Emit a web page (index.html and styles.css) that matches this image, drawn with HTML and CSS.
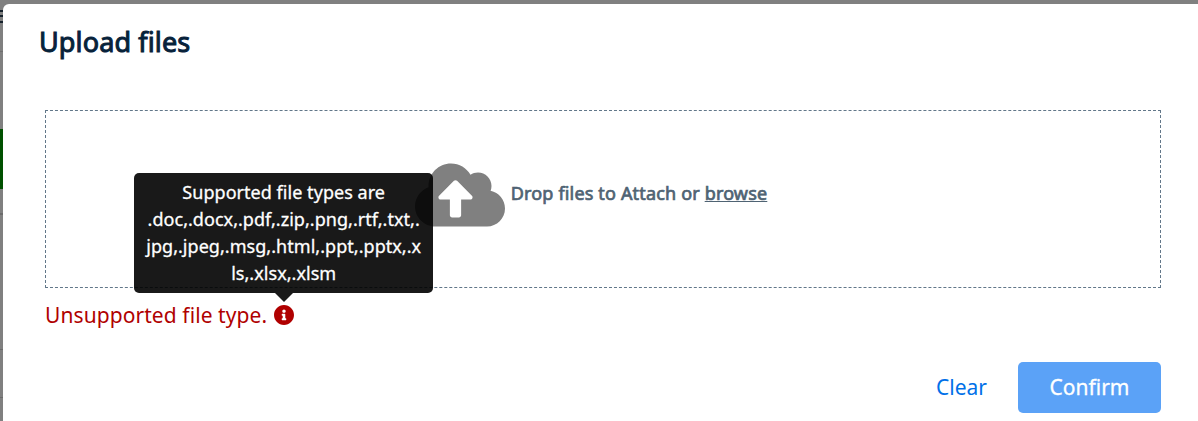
FILE: index.html
```
<!DOCTYPE html>
<html lang="en">
<head>
<meta charset="utf-8">
<title>Upload files</title>
<link rel="stylesheet" href="styles.css">
</head>
<body>
<div class="backdrop">
  <div class="menu-lines"></div>
  <div class="page-block"></div>
</div>
<main class="modal">
  <h1 class="title"><span class="title-text">Upload files</span></h1>
  <section class="dropzone">
    <svg class="cloud" viewBox="0 0 640 512"><path fill="#808080" d="M537.6 226.6c4.1-10.7 6.4-22.4 6.4-34.6 0-53-43-96-96-96-19.7 0-38.1 6-53.3 16.2C367 64.2 315.3 32 256 32c-88.4 0-160 71.6-160 160 0 2.7.1 5.4.2 8.1C40.2 219.8 0 273.2 0 336c0 79.5 64.5 144 144 144h368c70.7 0 128-57.3 128-128 0-61.9-44-113.6-102.4-125.4zM393.4 288H328v112c0 8.8-7.2 16-16 16h-48c-8.8 0-16-7.2-16-16V288h-65.4c-14.3 0-21.4-17.2-11.3-27.3l105.4-105.4c6.2-6.2 16.4-6.2 22.6 0l105.4 105.4c10.1 10.1 2.9 27.3-11.3 27.3z"/></svg>
    <p class="drop-text">Drop files to Attach or <span class="browse">browse</span></p>
  </section>
  <div class="error">
    <span class="error-text">Unsupported file type.</span>
    <span class="info">
      <svg class="info-icon" viewBox="8 8 496 496"><path fill="#b00000" d="M256 8C119.043 8 8 119.083 8 256c0 136.997 111.043 248 248 248s248-111.003 248-248C504 119.083 392.957 8 256 8zm0 110c23.196 0 42 18.804 42 42s-18.804 42-42 42-42-18.804-42-42 18.804-42 42-42zm56 254c0 6.627-5.373 12-12 12h-88c-6.627 0-12-5.373-12-12v-24c0-6.627 5.373-12 12-12h12v-64h-12c-6.627 0-12-5.373-12-12v-24c0-6.627 5.373-12 12-12h64c6.627 0 12 5.373 12 12v100h12c6.627 0 12 5.373 12 12v24z"/></svg>
      <span class="tooltip" role="tooltip">Supported file types are<br>.doc,.docx,.pdf,.zip,.png,.rtf,.txt,.<br>jpg,.jpeg,.msg,.html,.ppt,.pptx,.x<br>ls,.xlsx,.xlsm</span>
    </span>
  </div>
  <footer class="actions">
    <button class="clear">Clear</button>
    <button class="confirm">Confirm</button>
  </footer>
</main>
</body>
</html>
```
FILE: styles.css
```
* { box-sizing: border-box; }
body {
  margin: 0;
  height: 421px;
  overflow: hidden;
  padding: 4px 0 0 3px;
  background: #808080;
  font-family: "Noto Sans", "Open Sans", sans-serif;
}
.backdrop {
  position: absolute;
  left: 0;
  top: 0;
  width: 8px;
  height: 421px;
  background:
    linear-gradient(#6f6f6f, #6f6f6f) 0 51px / 8px 1px no-repeat,
    linear-gradient(#6b6b6b, #6b6b6b) 0 213px / 8px 2px no-repeat,
    linear-gradient(#6b6b6b, #6b6b6b) 0 349px / 8px 1px no-repeat,
    linear-gradient(#6b6b6b, #6b6b6b) 0 397px / 8px 1px no-repeat;
}
.menu-lines {
  width: 3px;
  height: 13px;
  margin-top: 10px;
  background: repeating-linear-gradient(#15212b 0 2px, #808080 2px 5.5px);
}
.page-block { width: 3px; height: 60px; margin-top: 106px; background: #005000; }
.modal {
  position: relative;
  height: 417px;
  padding: 0 37px 0 42px;
  background: #fff;
  border-radius: 6px 0 0 0;
}
.title {
  margin: 0 0 0 -6px;
  height: 106px;
  padding-top: 19px;
  font-size: 27px;
  line-height: 38px;
  font-weight: 400;
  letter-spacing: .13px;
  color: #07223a;
  -webkit-text-stroke: 1px #07223a;
}
.dropzone {
  height: 178px;
  border: 1px dashed #627789;
  display: flex;
  justify-content: center;
  gap: 6px;
  padding-right: 24px;
}
.cloud { width: 90px; height: 72px; margin-top: 48px; }
.drop-text {
  margin: 69px 0 0;
  font-size: 18px;
  line-height: 27px;
  letter-spacing: .17px;
  color: #4f6373;
  -webkit-text-stroke: 0.7px #4f6373;
}
.browse { text-decoration: underline; }
.error {
  display: flex;
  align-items: center;
  gap: 7px;
  height: 30px;
  margin-top: 12px;
  font-size: 21px;
  letter-spacing: .08px;
  color: #b00000;
}
.info { position: relative; display: flex; }
.info-icon { width: 20px; height: 20px; }
.tooltip {
  position: absolute;
  left: 50%;
  bottom: 32px;
  width: 299px;
  height: 120px;
  margin-left: -150px;
  padding-top: 6px;
  border-radius: 5px;
  background: rgba(0, 0, 0, .9);
  color: #fff;
  font-size: 18px;
  line-height: 27px;
  letter-spacing: .04px;
  -webkit-text-stroke: 0.3px #fff;
  text-align: center;
  white-space: nowrap;
}
.tooltip::after {
  content: "";
  position: absolute;
  top: 100%;
  left: 50%;
  margin-left: -9px;
  border: 9px solid transparent;
  border-top-color: rgba(0, 0, 0, .9);
  border-bottom: 0;
}
.actions { display: flex; justify-content: flex-end; gap: 31px; margin-top: 32px; }
button { border: 0; padding: 0 0 2px; font: 21px "Noto Sans", "Open Sans", sans-serif; background: none; }
.clear { color: #0070e8; }
.confirm {
  width: 143px;
  height: 51px;
  border-radius: 5px;
  background: #5ba2f7;
  color: #fff;
  -webkit-text-stroke: 0.3px #fff;
}
```
